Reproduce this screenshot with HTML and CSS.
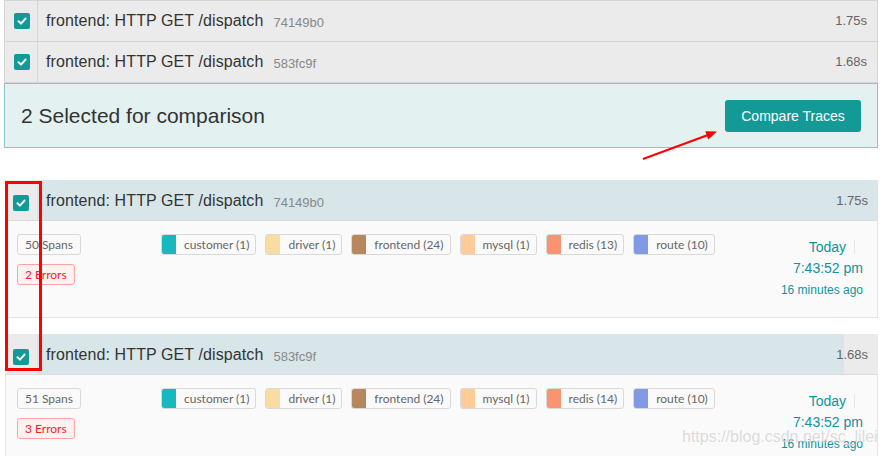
FILE: index.html
```html
<!DOCTYPE html>
<html>
<head>
<meta charset="utf-8">
<link rel="stylesheet" href="styles.css">
</head>
<body>
<div class="page">
  <div class="top-list">
    <div class="row">
      <div class="check-cell divided"><span class="cb"><svg viewBox="0 0 16 16" width="16" height="16"><polyline points="4.5,8.2 7,10.6 11.5,5.6" fill="none" stroke="#fff" stroke-width="2" stroke-linecap="round" stroke-linejoin="round"/></svg></span></div>
      <div class="row-main">
        <span class="title">frontend: HTTP GET /dispatch</span><span class="tid">74149b0</span>
        <span class="dur">1.75s</span>
      </div>
    </div>
    <div class="row">
      <div class="check-cell divided"><span class="cb"><svg viewBox="0 0 16 16" width="16" height="16"><polyline points="4.5,8.2 7,10.6 11.5,5.6" fill="none" stroke="#fff" stroke-width="2" stroke-linecap="round" stroke-linejoin="round"/></svg></span></div>
      <div class="row-main">
        <span class="title">frontend: HTTP GET /dispatch</span><span class="tid">583fc9f</span>
        <span class="dur">1.68s</span>
      </div>
    </div>
  </div>

  <div class="compare-panel">
    <span class="compare-text">2 Selected for comparison</span>
    <button class="btn">Compare Traces</button>
  </div>

  <div class="card first">
    <div class="card-header">
      <div class="check-cell"><span class="cb"><svg viewBox="0 0 16 16" width="16" height="16"><polyline points="4.5,8.2 7,10.6 11.5,5.6" fill="none" stroke="#fff" stroke-width="2" stroke-linecap="round" stroke-linejoin="round"/></svg></span></div>
      <div class="header-main" style="--pct: 100%">
        <span class="title">frontend: HTTP GET /dispatch</span><span class="tid">74149b0</span>
        <span class="dur">1.75s</span>
      </div>
    </div>
    <div class="card-body">
      <div class="stats">
        <span class="tag">50 Spans</span>
        <span class="tag err">2 Errors</span>
      </div>
      <div class="services">
        <span class="svc"><i class="sw c-customer"></i><span class="svc-name">customer (1)</span></span>
        <span class="svc"><i class="sw c-driver"></i><span class="svc-name">driver (1)</span></span>
        <span class="svc"><i class="sw c-frontend"></i><span class="svc-name">frontend (24)</span></span>
        <span class="svc"><i class="sw c-mysql"></i><span class="svc-name">mysql (1)</span></span>
        <span class="svc"><i class="sw c-redis"></i><span class="svc-name">redis (13)</span></span>
        <span class="svc"><i class="sw c-route"></i><span class="svc-name">route (10)</span></span>
      </div>
      <div class="when">
        <div class="day">Today<span class="vdiv"></span></div>
        <div class="time">7:43:52 pm</div>
        <div class="ago">16 minutes ago</div>
      </div>
    </div>
  </div>

  <div class="card">
    <div class="card-header">
      <div class="check-cell"><span class="cb"><svg viewBox="0 0 16 16" width="16" height="16"><polyline points="4.5,8.2 7,10.6 11.5,5.6" fill="none" stroke="#fff" stroke-width="2" stroke-linecap="round" stroke-linejoin="round"/></svg></span></div>
      <div class="header-main" style="--pct: 96%">
        <span class="title">frontend: HTTP GET /dispatch</span><span class="tid">583fc9f</span>
        <span class="dur">1.68s</span>
      </div>
    </div>
    <div class="card-body">
      <div class="stats">
        <span class="tag">51 Spans</span>
        <span class="tag err">3 Errors</span>
      </div>
      <div class="services">
        <span class="svc"><i class="sw c-customer"></i><span class="svc-name">customer (1)</span></span>
        <span class="svc"><i class="sw c-driver"></i><span class="svc-name">driver (1)</span></span>
        <span class="svc"><i class="sw c-frontend"></i><span class="svc-name">frontend (24)</span></span>
        <span class="svc"><i class="sw c-mysql"></i><span class="svc-name">mysql (1)</span></span>
        <span class="svc"><i class="sw c-redis"></i><span class="svc-name">redis (14)</span></span>
        <span class="svc"><i class="sw c-route"></i><span class="svc-name">route (10)</span></span>
      </div>
      <div class="when">
        <div class="day">Today<span class="vdiv"></span></div>
        <div class="time">7:43:52 pm</div>
        <div class="ago">16 minutes ago</div>
      </div>
    </div>
  </div>
</div>

<div class="red-box"></div>
<svg class="arrow" width="884" height="456" viewBox="0 0 884 456">
  <line x1="643" y1="159" x2="708" y2="135" stroke="#f00" stroke-width="2"/>
  <polygon points="717,131.5 708.3,139.6 705.3,131.2" fill="#f00"/>
</svg>
<div class="watermark">https://blog.csdn.net/sc_lilei</div>
</body>
</html>
```

FILE: styles.css
```css
* { box-sizing: border-box; }
html, body { margin: 0; padding: 0; background: #fff; }
body {
  font-family: "Liberation Sans", Arial, sans-serif;
  color: #333;
  width: 884px;
  height: 456px;
  overflow: hidden;
  position: relative;
}
.page {
  margin-left: 4px;
  width: 874px;
}

/* top selected list */
.top-list {
  border: 1px solid #d4d4d4;
  border-bottom: none;
}
.row {
  display: flex;
  height: 41px;
  background: #ebebeb;
  border-bottom: 1px solid #d4d4d4;
}
.check-cell {
  width: 33px;
  flex: none;
  display: flex;
  align-items: center;
  justify-content: center;
  padding-left: 1px;
  background: #ebebeb;
}
.check-cell.divided { border-right: 1px solid #d6d6d6; }
.cb {
  width: 16px;
  height: 16px;
  border-radius: 2px;
  background: #139a97;
  display: block;
}
.cb svg { display: block; }
.row-main, .header-main {
  flex: 1;
  display: flex;
  align-items: center;
  padding: 0 9px 0 9px;
}
.row-main { padding-left: 8px; }
.title {
  font-size: 16px;
  color: #333;
  letter-spacing: 0.1px;
}
.tid {
  font-size: 13px;
  color: #888;
  margin-left: 10px;
  margin-top: 2px;
}
.dur {
  margin-left: auto;
  font-size: 13px;
  color: #666;
  margin-top: -1px;
  margin-right: 1px;
}

/* compare panel */
.compare-panel {
  height: 65px;
  background: #e3f1f1;
  border: 1px solid #8ac6c6;
  display: flex;
  align-items: center;
  justify-content: space-between;
  padding: 0 16px;
}
.compare-text {
  font-size: 21px;
  color: #333;
  margin-top: 1px;
}
.btn {
  font-family: "Liberation Sans", Arial, sans-serif;
  font-size: 14px;
  color: #fff;
  background: #139a97;
  border: none;
  border-radius: 3px;
  height: 32px;
  width: 136px;
  padding: 0;
  margin-top: 1px;
}

/* cards */
.card {
  margin-top: 16px;
  margin-left: 1px;
}
.card.first { margin-top: 32px; }
.card-header {
  display: flex;
  height: 41px;
  background: #ebebeb;
  border-bottom: 1px solid #dcdcdc;
}
.card-header .check-cell { width: 32px; padding-left: 0; padding-top: 5px; }
.header-main {
  background: linear-gradient(to right, #d8e6e9 var(--pct), #ebebeb var(--pct));
  padding-top: 2px;
}
.card-body {
  background: #fafafa;
  border: 1px solid #e4e4e4;
  border-top: none;
  display: grid;
  grid-template-columns: 144px 1fr auto;
  align-items: start;
  padding: 13px 14px 16px 11px;
  font-family: Lato, "Open Sans", sans-serif;
}
.stats {
  display: flex;
  flex-direction: column;
  align-items: flex-start;
  gap: 9px;
}
.tag {
  display: inline-block;
  height: 21px;
  line-height: 19px;
  font-size: 12px;
  color: #666;
  border: 1px solid #d9d9d9;
  border-radius: 3px;
  padding: 0 7px;
  background: #fafafa;
}
.tag.err {
  color: #f5222d;
  background: #fff1f0;
  border-color: #ffa39e;
}
.services {
  display: flex;
  gap: 9px;
}
.svc {
  display: flex;
  height: 21px;
  border: 1px solid #d9d9d9;
  border-radius: 3px;
  overflow: hidden;
  background: #fafafa;
}
.sw {
  width: 14px;
  flex: none;
  display: block;
}
.svc-name {
  font-size: 12px;
  color: #666;
  line-height: 19px;
  padding: 0 6px 0 8px;
}
.c-customer { background: #17b8be; }
.c-driver { background: #f8dca1; }
.c-frontend { background: #b7885e; }
.c-mysql { background: #ffcb99; }
.c-redis { background: #f89570; }
.c-route { background: #829ae3; }

.when {
  margin-top: 3px;
  text-align: right;
  color: #11939a;
  font-family: "Liberation Sans", Arial, sans-serif;
}
.day, .time {
  font-size: 14px;
  line-height: 21px;
}
.ago {
  font-size: 12px;
  line-height: 22px;
}
.vdiv {
  display: inline-block;
  width: 1px;
  height: 14px;
  background: #e6e6e6;
  margin: 0 8px;
  vertical-align: -2px;
}

/* annotations */
.red-box {
  position: absolute;
  left: 5px;
  top: 181px;
  width: 37px;
  height: 190px;
  border: 3px solid #f00;
}
.arrow {
  position: absolute;
  left: 0;
  top: 0;
  pointer-events: none;
}
.watermark {
  position: absolute;
  left: 682px;
  top: 428px;
  font-family: "Liberation Sans", Arial, sans-serif;
  font-size: 16px;
  color: rgba(190, 190, 190, 0.55);
  text-shadow: 0 0 1px rgba(255,255,255,0.8);
  white-space: nowrap;
}
```
